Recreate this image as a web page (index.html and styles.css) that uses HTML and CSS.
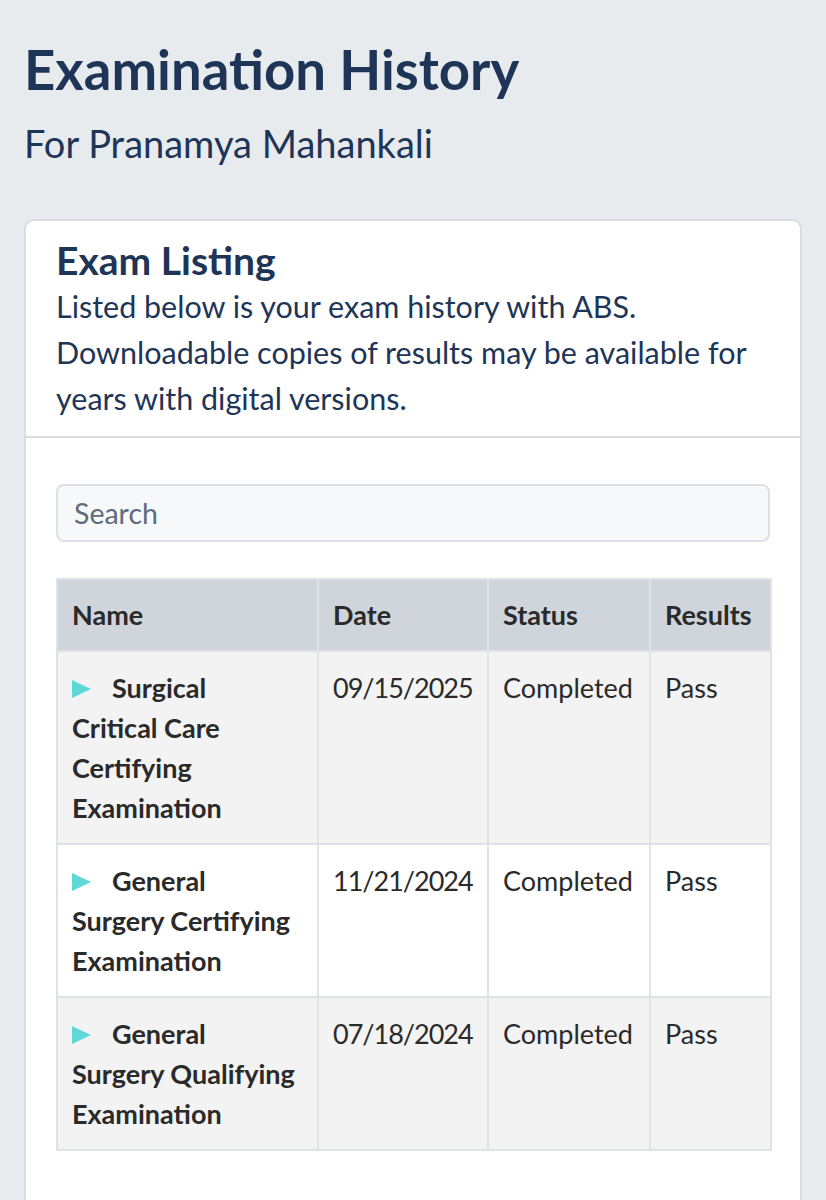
FILE: index.html
```html
<!DOCTYPE html>
<html lang="en">
<head>
<meta charset="utf-8">
<title>Examination History</title>
<link rel="stylesheet" href="styles.css">
</head>
<body>
<main class="page">
  <header class="page-head">
    <h1 class="page-title">Examination History</h1>
    <p class="page-sub">For Pranamya Mahankali</p>
  </header>
  <section class="card">
    <div class="card-head">
      <h2 class="card-title">Exam Listing</h2>
      <p class="card-desc">Listed below is your exam history with ABS. Downloadable copies of results may be available for years with digital versions.</p>
    </div>
    <div class="card-body">
      <input class="search" type="text" placeholder="Search">
      <table class="exams">
        <colgroup>
          <col class="c-name"><col class="c-date"><col class="c-status"><col class="c-res">
        </colgroup>
        <thead>
          <tr><th>Name</th><th>Date</th><th>Status</th><th>Results</th></tr>
        </thead>
        <tbody>
          <tr>
            <td class="name"><span class="tri"></span>Surgical Critical Care Certifying Examination</td>
            <td class="date">09/15/2025</td><td>Completed</td><td>Pass</td>
          </tr>
          <tr>
            <td class="name"><span class="tri"></span>General Surgery Certifying Examination</td>
            <td class="date">11/21/2024</td><td>Completed</td><td>Pass</td>
          </tr>
          <tr>
            <td class="name"><span class="tri"></span>General Surgery Qualifying Examination</td>
            <td class="date">07/18/2024</td><td>Completed</td><td>Pass</td>
          </tr>
        </tbody>
      </table>
    </div>
  </section>
</main>
</body>
</html>
```
FILE: styles.css
```css
html, body {
  margin: 0;
  padding: 0;
  background: #e8ebee;
}
body {
  font-family: Lato, "Open Sans", sans-serif;
  color: #1e3557;
}
.page {
  padding: 37px 24px 0 24px;
}
.page-title {
  margin: 0;
  font-size: 54.5px;
  line-height: 64px;
  font-weight: 700;
  color: #1e3557;
}
.page-sub {
  margin: 20px 0 0 0;
  font-size: 38px;
  line-height: 44px;
  color: #1e3557;
}
.card {
  margin-top: 54px;
  background: #fff;
  border: 2px solid #d9dde2;
  border-radius: 10px;
  min-height: 1000px;
}
.card-head {
  padding: 16px 30px 15px 30px;
  border-bottom: 2px solid #d9dde2;
}
.card-title {
  margin: 0;
  font-size: 39px;
  line-height: 46px;
  font-weight: 700;
}
.card-desc {
  margin: 0;
  font-size: 30.5px;
  line-height: 46px;
}
.card-body {
  padding: 46px 30px;
}
.search {
  display: block;
  box-sizing: border-box;
  width: 100%;
  height: 58px;
  padding: 0 16px;
  background: #f7f8fa;
  border: 2px solid #dde1e5;
  border-radius: 8px;
  font-family: inherit;
  font-size: 28.5px;
  color: #1e3557;
}
.search::placeholder {
  color: #5f6b7a;
}
.exams {
  margin-top: 36px;
  width: 100%;
  border-collapse: collapse;
  table-layout: fixed;
  font-size: 27px;
  color: #2a2a2a;
}
.c-name { width: 261px; }
.c-date { width: 170px; }
.c-status { width: 162px; }
.c-res { width: 121px; }
.exams th, .exams td {
  border: 2px solid #dfe2e6;
  padding: 16px 14px 15px 14px;
  text-align: left;
  vertical-align: top;
  line-height: 40px;
}
.exams th {
  background: #d0d5dc;
  font-weight: 700;
  padding-top: 15px;
  padding-bottom: 15px;
}
.exams tbody tr:nth-child(odd) td {
  background: #f3f3f3;
}
.exams tbody tr:nth-child(even) td {
  background: #fff;
}
.exams td.name {
  font-weight: 700;
  padding-right: 21px;
}
.exams td.date {
  letter-spacing: -1px;
}
.tri {
  display: inline-block;
  width: 0;
  height: 0;
  border-top: 9px solid transparent;
  border-bottom: 9px solid transparent;
  border-left: 19px solid #5fd8d8;
  margin-right: 21px;
  vertical-align: 0px;
}
```
